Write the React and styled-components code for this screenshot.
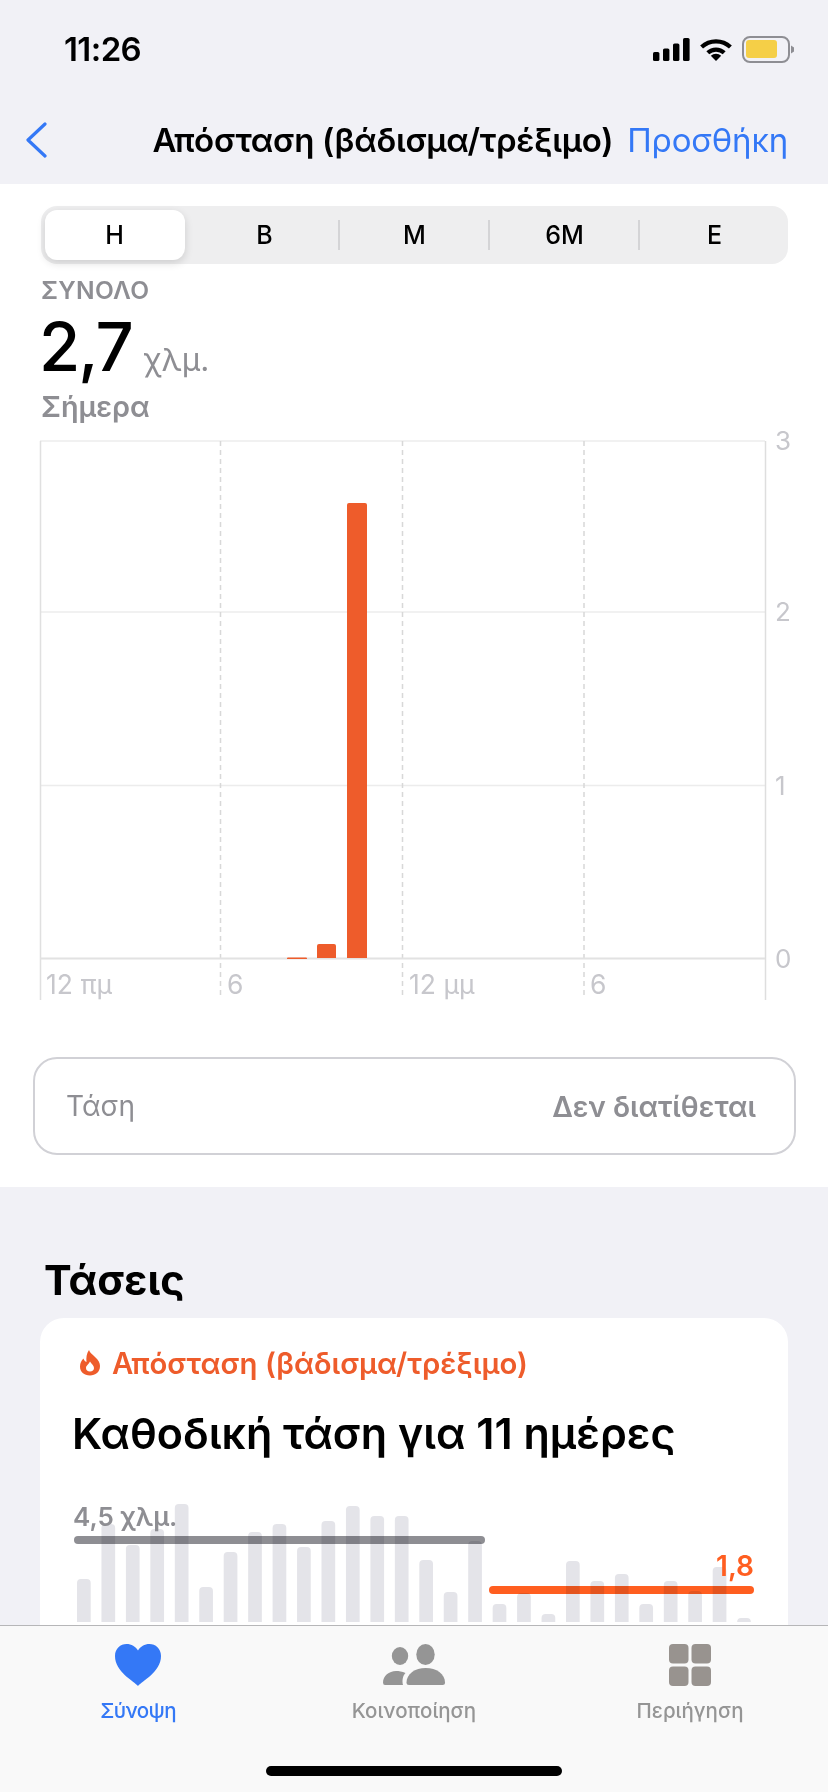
import React from "react";
import styled, { createGlobalStyle } from "styled-components";

const Global = createGlobalStyle`
  html, body { margin: 0; padding: 0; background: #f1f1f6; }
  body { font-family: Inter, "Noto Sans", sans-serif; -webkit-font-smoothing: antialiased; }
`;

const Screen = styled.div`
  position: relative;
  width: 828px;
  height: 1792px;
  overflow: hidden;
  background: #f1f1f6;
`;

const StatusBar = styled.div`
  display: flex;
  align-items: center;
  justify-content: space-between;
  height: 98px;
  padding: 0 34px 2px 64px;
`;

const Time = styled.div`
  font-size: 33px;
  font-weight: 600;
  letter-spacing: -0.6px;
  color: #000;
`;

const StatusIcons = styled.div`
  display: flex;
  align-items: center;
  gap: 10px;
`;

const NavBar = styled.div`
  display: flex;
  align-items: center;
  height: 84px;
  padding: 0 40px 4px 25px;
  box-sizing: border-box;
`;

const NavTitle = styled.div`
  margin-left: auto;
  margin-right: 14px;
  font-size: 33px;
  font-weight: 600;
  letter-spacing: -0.3px;
  color: #000;
  white-space: nowrap;
`;

const NavAction = styled.div`
  font-size: 33px;
  letter-spacing: -0.15px;
  color: #3478f6;
  white-space: nowrap;
`;

const WhitePanel = styled.section`
  background: #fff;
  padding: 22px 0 32px;
`;

const Segmented = styled.div`
  display: grid;
  grid-template-columns: repeat(5, 150px);
  justify-content: center;
  height: 58px;
  margin: 0 40px 0 41px;
  border-radius: 16px;
  background: #eeeeef;
`;

const Segment = styled.div`
  position: relative;
  display: flex;
  align-items: center;
  justify-content: center;
  margin: ${(p) => (p.$active ? "4px 5px" : "0")};
  border-radius: 12px;
  background: ${(p) => (p.$active ? "#fff" : "transparent")};
  box-shadow: ${(p) => (p.$active ? "0 3px 8px rgba(0, 0, 0, 0.14)" : "none")};
  font-size: 25px;
  font-weight: 500;
  color: #000;

  &::after {
    content: "";
    display: ${(p) => (p.$divider ? "block" : "none")};
    position: absolute;
    right: 0;
    top: 14px;
    bottom: 14px;
    width: 1.5px;
    background: #d4d4d6;
  }
`;

const Summary = styled.div`
  margin: 12px 0 2px 41px;
`;

const SummaryLabel = styled.div`
  font-size: 24.5px;
  line-height: 28px;
  font-weight: 600;
  letter-spacing: 0.3px;
  color: #8e8e93;
`;

const SummaryValue = styled.div`
  display: flex;
  align-items: baseline;
  gap: 12px;
  height: 72px;
  margin: 7px 0 0 -2px;
  line-height: 72px;
`;

const BigNumber = styled.span`
  font-size: 67px;
  font-weight: 500;
  letter-spacing: -2px;
  color: #000;
`;

const Unit = styled.span`
  font-size: 31.5px;
  color: #8e8e93;
`;

const SummaryDate = styled.div`
  margin-top: 7px;
  font-size: 28.8px;
  line-height: 34px;
  font-weight: 600;
  color: #8e8e93;
`;

const Plot = styled.svg`
  display: block;
  font-family: Inter, "Noto Sans", sans-serif;
`;

const TrendBox = styled.div`
  display: flex;
  align-items: center;
  justify-content: space-between;
  box-sizing: border-box;
  height: 98px;
  margin: 51px 32px 0 33px;
  padding: 0 38px 0 31px;
  border: 2px solid #d1d1d6;
  border-radius: 24px;
  font-size: 28px;
  color: #8e8e93;
`;

const TrendValue = styled.span`
  font-size: 28.6px;
  font-weight: 600;
`;

const SectionTitle = styled.h2`
  margin: 70px 0 15px 44px;
  font-size: 41.5px;
  line-height: 46px;
  font-weight: 700;
  color: #000;
`;

const Card = styled.div`
  margin: 0 40px;
  height: 500px;
  border-radius: 24px;
  background: #fff;
`;

const CardHead = styled.div`
  padding: 30px 32px 35px;
`;

const CardLabel = styled.div`
  display: flex;
  align-items: center;
  gap: 11px;
  padding-left: 7px;
  height: 30px;
  font-size: 29.3px;
  font-weight: 600;
  color: #ee5c2b;
`;

const CardTitle = styled.div`
  margin-top: 33px;
  font-size: 43px;
  line-height: 44px;
  font-weight: 600;
  color: #000;
  white-space: nowrap;
`;

const TabBar = styled.nav`
  position: absolute;
  left: 0;
  right: 0;
  bottom: 0;
  display: grid;
  grid-template-columns: repeat(3, 1fr);
  box-sizing: border-box;
  height: 167px;
  padding-top: 17px;
  border-top: 1px solid #b6b6b8;
  background: #f9f9f9;
`;

const Tab = styled.div`
  display: flex;
  flex-direction: column;
  align-items: center;
  color: ${(p) => (p.$active ? "#3478f6" : "#959595")};
`;

const TabIcon = styled.div`
  display: flex;
  align-items: center;
  justify-content: center;
  height: 44px;
`;

const TabLabel = styled.div`
  margin-top: 11px;
  font-size: 20.5px;
  line-height: 26px;
  font-weight: 500;
  letter-spacing: ${(p) => (p.$active ? "-0.6px" : "0")};
`;

const HomeIndicator = styled.div`
  position: absolute;
  left: 266px;
  bottom: 16px;
  width: 296px;
  height: 10px;
  border-radius: 5px;
  background: #000;
`;

const ranges = ["Η", "Β", "Μ", "6Μ", "Ε"];

const gridY = [441, 612, 785.5];
const dashedX = [220.5, 402.5, 584];
const yLabels = [
  ["3", 441],
  ["2", 612],
  ["1", 785.5],
  ["0", 959],
];
const xLabels = [
  ["12 πμ", 46],
  ["6", 227],
  ["12 μμ", 409],
  ["6", 590],
];

const trendTops = [
  1579, 1524, 1545, 1529, 1504, 1587, 1552, 1532, 1524, 1547, 1521, 1506, 1516, 1516,
  1560, 1592, 1541, 1604, 1593, 1614, 1561, 1581, 1574, 1604, 1581, 1591, 1567, 1618,
];

const Signal = () => (
  <svg width="37" height="23" viewBox="0 0 37 23">
    <rect x="0" y="14" width="6.4" height="9" rx="1.6" />
    <rect x="10" y="10.5" width="6.4" height="12.5" rx="1.6" />
    <rect x="20" y="5.5" width="6.4" height="17.5" rx="1.6" />
    <rect x="30" y="0" width="6.6" height="23" rx="1.6" />
  </svg>
);

const Wifi = () => (
  <svg width="32" height="24" viewBox="0 0 32 24">
    <path d="M1.6 10 A21 21 0 0 1 30.4 10" fill="none" stroke="#000" strokeWidth="4.2" />
    <path d="M7.8 15.8 A12 12 0 0 1 24.2 15.8" fill="none" stroke="#000" strokeWidth="4.2" />
    <path d="M16 24 L10.8 18.8 A7.4 7.4 0 0 1 21.2 18.8 Z" />
  </svg>
);

const Battery = () => (
  <svg width="52" height="27" viewBox="0 0 52 27">
    <rect x="1" y="1" width="46" height="25" rx="7" fill="none" stroke="#8e8e93" strokeWidth="2" />
    <rect x="4" y="4" width="31" height="18" rx="3" fill="#f5cf47" />
    <path d="M49 9.5 L52 11.5 V15.5 L49 17.5 Z" fill="#8e8e93" />
  </svg>
);

const Chevron = () => (
  <svg width="22" height="36" viewBox="0 0 22 36">
    <polyline points="20,2 3,18 20,34" fill="none" stroke="#3478f6" strokeWidth="3.2" strokeLinecap="round" strokeLinejoin="round" />
  </svg>
);

const Flame = () => (
  <svg width="22" height="26" viewBox="0 0 22 26">
    <path
      fillRule="evenodd"
      fill="#ee5c2b"
      d="M10 0 C11 3 13 4 16 7 C19.5 10 21 13 21 16 C21 22 16.5 25.5 11 25.5 C5 25.5 1 22 1 16.5 C1 13 2.5 10.5 4.5 8.5 C5 10.5 6 11.5 7.5 12 C7 8 7.5 3.5 10 0 Z M11 21.5 C13.5 21.5 15 20 15 18 C15 15.5 12.5 14 11 11.5 C9.5 14.5 7 15.5 7 18 C7 20 8.5 21.5 11 21.5 Z"
    />
  </svg>
);

const Heart = () => (
  <svg width="46" height="42" viewBox="0 0 46 42">
    <path
      fill="currentColor"
      d="M23 42 C19 37 0 28 0 12 C0 4.5 5.5 0 11.5 0 C16.5 0 20.5 2.5 23 6.5 C25.5 2.5 29.5 0 34.5 0 C40.5 0 46 4.5 46 12 C46 28 27 37 23 42 Z"
    />
  </svg>
);

const People = () => (
  <svg width="64" height="42" viewBox="0 0 64 42">
    <g fill="currentColor">
      <ellipse cx="18" cy="12" rx="8.2" ry="9" />
      <ellipse cx="43.5" cy="10.5" rx="9.2" ry="10.5" />
      <path d="M27 41 Q24.5 41 24.5 38.5 C24.5 30 33 24 43.7 24 C54.5 24 63 30 63 38.5 Q63 41 60.5 41 Z" />
      <path d="M3 41 Q1 41 1 38.5 C1 32 7 27 14 27 C17 27 20 27.6 23.5 29 C20.5 32 20 37 21 41 Z" />
    </g>
  </svg>
);

const Squares = () => (
  <svg width="42" height="42" viewBox="0 0 42 42">
    <g fill="#98938f">
      <rect x="0" y="0" width="19.5" height="19.5" rx="4" />
      <rect x="22.5" y="0" width="19.5" height="19.5" rx="4" />
      <rect x="0" y="22.5" width="19.5" height="19.5" rx="4" />
      <rect x="22.5" y="22.5" width="19.5" height="19.5" rx="4" />
    </g>
  </svg>
);

const DistanceChart = () => (
  <Plot width="828" height="580" viewBox="0 426 828 580">
    {gridY.map((y) => (
      <line key={y} x1="40" x2="765" y1={y} y2={y} stroke="#ececec" strokeWidth="1.5" />
    ))}
    {dashedX.map((x) => (
      <line key={x} x1={x} x2={x} y1="441" y2="998" stroke="#d8d8d8" strokeWidth="1.5" strokeDasharray="5 4" />
    ))}
    <line x1="40.5" x2="40.5" y1="441" y2="1000" stroke="#e0e0e0" strokeWidth="1.5" />
    <line x1="765.5" x2="765.5" y1="441" y2="1000" stroke="#dedede" strokeWidth="1.5" />
    <line x1="40" x2="765" y1="958.5" y2="958.5" stroke="#e2e2e2" strokeWidth="2" />
    <path d="M287 959 V958.5 Q287 957.5 288 957.5 H306 Q307 957.5 307 958.5 V959 Z" fill="#ee5c2b" />
    <path d="M317 958 V946 Q317 944 319 944 H334 Q336 944 336 946 V958 Z" fill="#ee5c2b" />
    <path d="M347 958 V505 Q347 503 349 503 H365 Q367 503 367 505 V958 Z" fill="#ee5c2b" />
    {yLabels.map(([label, y]) => (
      <text key={label} x="775" y={y + 9} fontSize="26" fill="#c7c7cc">{label}</text>
    ))}
    {xLabels.map(([label, x]) => (
      <text key={x} x={x} y="994" fontSize="26.5" fill="#c7c7cc">{label}</text>
    ))}
  </Plot>
);

const TrendChart = () => (
  <Plot width="748" height="145" viewBox="40 1490 748 145">
    {trendTops.map((top, i) => (
      <path
        key={i}
        fill="#e4e4e9"
        d={`M${77 + i * 24.45} 1622 V${top + 4} q0 -4 4 -4 h5.7 q4 0 4 4 V1622 Z`}
      />
    ))}
    <rect x="74" y="1536" width="411" height="8" rx="4" fill="#8e8e93" style={{ mixBlendMode: "multiply" }} />
    <rect x="489" y="1586" width="265" height="8" rx="4" fill="#ff5e20" style={{ mixBlendMode: "multiply" }} />
    <text x="73" y="1526" fontSize="26" fontWeight="600" fill="#8e8e93">4,5 χλμ.</text>
    <text x="754" y="1576" fontSize="28" fontWeight="600" fill="#ff5e20" textAnchor="end">1,8</text>
  </Plot>
);

export default function App() {
  return (
    <Screen>
      <Global />
      <StatusBar>
        <Time>11:26</Time>
        <StatusIcons>
          <Signal />
          <Wifi />
          <Battery />
        </StatusIcons>
      </StatusBar>
      <NavBar>
        <Chevron />
        <NavTitle>Απόσταση (βάδισμα/τρέξιμο)</NavTitle>
        <NavAction>Προσθήκη</NavAction>
      </NavBar>
      <WhitePanel>
        <Segmented>
          {ranges.map((r, i) => (
            <Segment key={r} $active={i === 0} $divider={i >= 1 && i <= 3}>{r}</Segment>
          ))}
        </Segmented>
        <Summary>
          <SummaryLabel>ΣΥΝΟΛΟ</SummaryLabel>
          <SummaryValue>
            <BigNumber>2,7</BigNumber>
            <Unit>χλμ.</Unit>
          </SummaryValue>
          <SummaryDate>Σήμερα</SummaryDate>
        </Summary>
        <DistanceChart />
        <TrendBox>
          <span>Τάση</span>
          <TrendValue>Δεν διατίθεται</TrendValue>
        </TrendBox>
      </WhitePanel>
      <SectionTitle>Τάσεις</SectionTitle>
      <Card>
        <CardHead>
          <CardLabel>
            <Flame />
            Απόσταση (βάδισμα/τρέξιμο)
          </CardLabel>
          <CardTitle>Καθοδική τάση για 11 ημέρες</CardTitle>
        </CardHead>
        <TrendChart />
      </Card>
      <TabBar>
        <Tab $active>
          <TabIcon><Heart /></TabIcon>
          <TabLabel $active>Σύνοψη</TabLabel>
        </Tab>
        <Tab>
          <TabIcon><People /></TabIcon>
          <TabLabel>Κοινοποίηση</TabLabel>
        </Tab>
        <Tab>
          <TabIcon><Squares /></TabIcon>
          <TabLabel>Περιήγηση</TabLabel>
        </Tab>
      </TabBar>
      <HomeIndicator />
    </Screen>
  );
}
